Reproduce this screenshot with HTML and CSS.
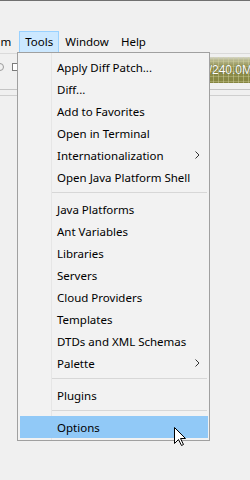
FILE: index.html
```html
<!DOCTYPE html>
<html>
<head>
<meta charset="utf-8">
<link rel="stylesheet" href="styles.css">
</head>
<body>
<div class="window">
  <div class="titlebar"></div>
  <nav class="menubar">
    <span class="mb-item first">Team</span>
    <span class="mb-item open">Tools</span>
    <span class="mb-item">Window</span>
    <span class="mb-item">Help</span>
  </nav>
  <div class="toolbar">
    <div class="tb-icons">
      <span class="ico-round"></span>
      <span class="ico-doc"></span>
    </div>
    <div class="memory"><span class="mem-text">88.7/240.0MB</span></div>
  </div>
  <div class="strip"></div>

  <div class="menu">
    <div class="item">Apply Diff Patch...</div>
    <div class="item">Diff...</div>
    <div class="item">Add to Favorites</div>
    <div class="item">Open in Terminal</div>
    <div class="item sub">Internationalization<svg class="chev" width="5" height="8" viewBox="0 0 5 8"><polyline points="0.5,0.5 4,4 0.5,7.5" fill="none" stroke="#333" stroke-width="1"/></svg></div>
    <div class="item">Open Java Platform Shell</div>
    <div class="sep"></div>
    <div class="item">Java Platforms</div>
    <div class="item">Ant Variables</div>
    <div class="item">Libraries</div>
    <div class="item">Servers</div>
    <div class="item">Cloud Providers</div>
    <div class="item">Templates</div>
    <div class="item">DTDs and XML Schemas</div>
    <div class="item sub">Palette<svg class="chev" width="5" height="8" viewBox="0 0 5 8"><polyline points="0.5,0.5 4,4 0.5,7.5" fill="none" stroke="#333" stroke-width="1"/></svg></div>
    <div class="sep"></div>
    <div class="item">Plugins</div>
    <div class="sep"></div>
    <div class="item active">Options</div>
  </div>

  <svg class="cursor" width="13" height="20" viewBox="0 0 13 20">
    <polygon points="0.5,0.5 0.5,16.5 4.5,12.5 7.5,18.5 9.5,17.5 6.5,11.5 11.5,11.5" fill="#fff" stroke="#000" stroke-width="1" stroke-linejoin="miter"/>
  </svg>
</div>
</body>
</html>
```

FILE: styles.css
```css
html, body {
  margin: 0;
  padding: 0;
}
body {
  background: #f0f0f0;
  font-family: "Noto Sans", "Open Sans", sans-serif;
  font-size: 11.5px;
  color: #000;
}
.window {
  position: relative;
  width: 250px;
  height: 480px;
  overflow: hidden;
  background: #f0f0f0;
}
.titlebar {
  height: 30px;
  border-top: 1px solid #707070;
  background: #f0f0f0;
}
.menubar {
  display: flex;
  height: 22px;
  margin-left: -24px;
  white-space: nowrap;
}
.mb-item {
  display: flex;
  align-items: center;
  padding: 0 5px;
  border: 1px solid transparent;
  line-height: 1;
}
.mb-item.first {
  padding-right: 7px;
}
.mb-item.open {
  background: #cce8ff;
  border-color: #99d1ff;
}
.toolbar {
  display: flex;
  justify-content: space-between;
  align-items: flex-start;
  height: 35px;
  border-top: 1px solid #dadada;
  border-bottom: 1px solid #c4c4c4;
}
.tb-icons {
  display: flex;
  gap: 8px;
  padding-top: 9px;
  margin-left: -4px;
}
.ico-round {
  width: 6px;
  height: 6px;
  border: 1px solid #9a9a9a;
  border-radius: 50%;
}
.ico-doc {
  width: 5px;
  height: 6px;
  border: 1px solid #7a7a7a;
  background: #fff;
}
.memory {
  margin-top: 3px;
  margin-right: -14px;
  height: 26px;
  width: 110px;
  display: flex;
  align-items: center;
  justify-content: flex-end;
  padding-right: 4px;
  box-sizing: border-box;
  background:
    repeating-linear-gradient(90deg, transparent 0 4px, rgba(210,210,160,0.45) 4px 5px),
    repeating-linear-gradient(180deg, transparent 0 4px, rgba(210,210,160,0.35) 4px 5px),
    linear-gradient(180deg, #d6d6c8 0, #b8b890 12%, #8f8f4e 40%, #85853f 100%);
}
.mem-text {
  font-family: "Liberation Sans", Arial, sans-serif;
  font-size: 12px;
  color: #fff;
  text-shadow: 0 0 1px #4a4a20;
  white-space: nowrap;
}
.strip {
  height: 5px;
  border-bottom: 1px solid #cfcfcf;
}

/* dropdown menu (overlay) */
.menu {
  position: absolute;
  left: 17px;
  top: 52px;
  width: 193px;
  height: 389px;
  box-sizing: border-box;
  border: 1px solid #a0a0a0;
  padding: 3px 1px 2px 2px;
  background:
    linear-gradient(90deg, transparent 0 33px, #e6e6e6 33px 34px, transparent 34px),
    #f2f2f2;
  background-origin: padding-box;
}
.item {
  height: 22px;
  display: flex;
  align-items: center;
  justify-content: space-between;
  padding: 0 8px 0 37px;
  white-space: nowrap;
}
.item.active {
  background: #91c9f7;
}
.chev {
  display: block;
}
.sep {
  height: 10px;
  margin: 0 1px 0 32px;
  background: linear-gradient(180deg, transparent 4px, #d7d7d7 4px 5px, transparent 5px);
}
.cursor {
  position: absolute;
  left: 174px;
  top: 427px;
}
```
